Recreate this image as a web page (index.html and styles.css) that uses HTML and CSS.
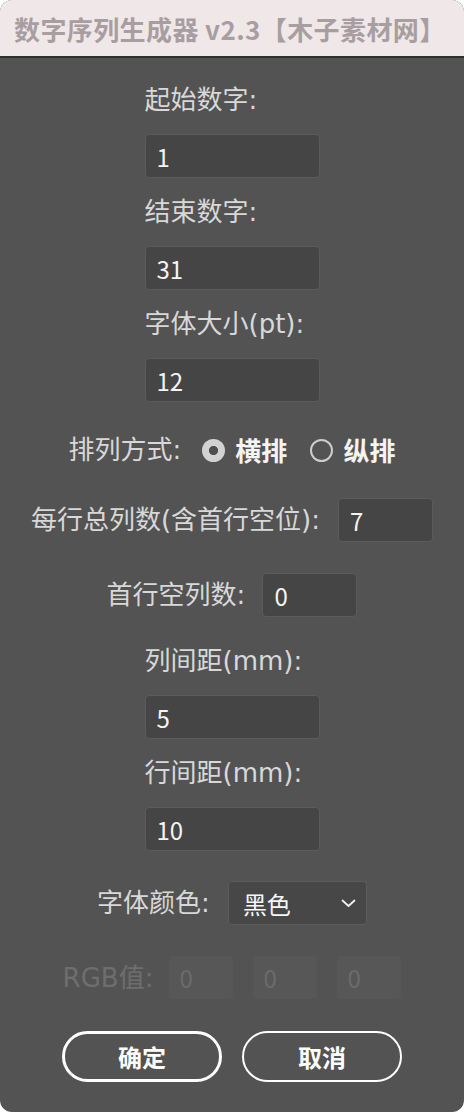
FILE: index.html
```html
<!DOCTYPE html>
<html lang="zh-CN">
<head>
<meta charset="utf-8">
<title>数字序列生成器</title>
<link rel="stylesheet" href="styles.css">
</head>
<body>
<div class="window">
  <header class="titlebar">数字序列生成器 v2.3【木子素材网】</header>
  <main class="form">
    <div class="stack">
      <label class="label">起始数字:</label>
      <input class="field" type="text" value="1">
    </div>
    <div class="stack gap-s">
      <label class="label">结束数字:</label>
      <input class="field" type="text" value="31">
    </div>
    <div class="stack gap-s">
      <label class="label">字体大小(pt):</label>
      <input class="field" type="text" value="12">
    </div>

    <div class="radio-row">
      <span class="label radio-label">排列方式:</span>
      <span class="option"><span class="radio checked"></span>横排</span>
      <span class="option"><span class="radio"></span>纵排</span>
    </div>

    <div class="row row-cols">
      <label class="label">每行总列数(含首行空位):</label>
      <input class="field short" type="text" value="7">
    </div>
    <div class="row row-empty">
      <label class="label">首行空列数:</label>
      <input class="field short" type="text" value="0">
    </div>

    <div class="stack gap-m">
      <label class="label">列间距(mm):</label>
      <input class="field" type="text" value="5">
    </div>
    <div class="stack gap-s">
      <label class="label">行间距(mm):</label>
      <input class="field" type="text" value="10">
    </div>

    <div class="row row-color">
      <span class="label">字体颜色:</span>
      <div class="select">
        <span>黑色</span>
        <svg class="chevron" width="15" height="9" viewBox="0 0 15 9"><path d="M1.5 1.5 L7.5 7 L13.5 1.5" fill="none" stroke="#f0f0f0" stroke-width="1.8" stroke-linecap="round" stroke-linejoin="round"/></svg>
      </div>
    </div>

    <div class="row rgb-row">
      <span class="label disabled">RGB值:</span>
      <input class="field rgb" type="text" value="0" disabled>
      <input class="field rgb" type="text" value="0" disabled>
      <input class="field rgb" type="text" value="0" disabled>
    </div>

    <div class="buttons">
      <button class="btn primary" type="button">确定</button>
      <button class="btn" type="button">取消</button>
    </div>
  </main>
</div>
</body>
</html>
```
FILE: styles.css
```css
* { box-sizing: border-box; }

html, body {
  margin: 0;
  padding: 0;
  background: #ffffff;
}

body {
  font-family: "Noto Sans CJK SC", "Noto Sans", sans-serif;
}

.window {
  width: 464px;
  height: 1112px;
  border-radius: 12px;
  overflow: hidden;
  background: #535353;
  display: flex;
  flex-direction: column;
}

.titlebar {
  flex: none;
  height: 58px;
  padding-left: 14px;
  display: flex;
  align-items: center;
  background: #f0e7e9;
  color: #a89ea2;
  font-size: 26px;
  font-weight: 700;
  letter-spacing: 0.4px;
  white-space: nowrap;
  border-bottom: 2px solid #2f2f2f;
}

.form {
  display: flex;
  flex-direction: column;
  align-items: center;
  padding-top: 27px;
}

.stack {
  width: 175px;
  display: flex;
  flex-direction: column;
  gap: 19px;
}

.gap-s { margin-top: 19px; }
.gap-m { margin-top: 29px; }

.label {
  font-family: "DejaVu Sans", "Noto Sans CJK SC", sans-serif;
  font-size: 26px;
  line-height: 30px;
  color: #d8d8d8;
  white-space: nowrap;
}

.field {
  width: 100%;
  height: 44px;
  padding: 0 0 0 11px;
  background: #454545;
  border: 1px solid #5b5b5b;
  border-radius: 4px;
  color: #f4f4f4;
  font-family: inherit;
  font-size: 24px;
  outline: none;
}

.field.short { width: 95px; }

.row {
  display: flex;
  align-items: center;
}

.radio-row {
  margin-top: 33px;
  display: flex;
  align-items: center;
  height: 30px;
}

.radio-label { margin-right: 21px; }

.option {
  display: flex;
  align-items: center;
  gap: 10px;
  font-size: 26px;
  line-height: 30px;
  font-weight: 700;
  color: #f4f4f4;
}

.option + .option { margin-left: 23px; }

.radio {
  width: 23px;
  height: 23px;
  border-radius: 50%;
  border: 2px solid #cdcdcd;
}

.radio.checked {
  border: none;
  background: radial-gradient(circle, #4e4e4e 0 4.2px, #d2d2d2 5px);
}

.row-cols { margin-top: 33px; gap: 18px; }
.row-empty { margin-top: 31px; gap: 17px; }
.row-color { margin-top: 30px; gap: 18px; }

.select {
  width: 139px;
  height: 44px;
  padding: 0 10px 0 14px;
  display: flex;
  align-items: center;
  justify-content: space-between;
  background: #474747;
  border: 1px solid #5c5c5c;
  border-radius: 4px;
  color: #f6f6f6;
  font-size: 24px;
}

.chevron { display: block; }

.rgb-row {
  margin-top: 31px;
  gap: 20px;
}

.label.disabled {
  color: #6e6e6e;
  margin-right: -4px;
}

.field.rgb {
  width: 64px;
  height: 43px;
  background: #575757;
  border: none;
  color: #6b6b6b;
  padding-left: 10px;
}

.buttons {
  margin-top: 32px;
  display: flex;
  gap: 20px;
}

.btn {
  width: 160px;
  height: 51px;
  border-radius: 26px;
  background: transparent;
  border: 2px solid #ffffff;
  color: #ffffff;
  font-family: inherit;
  font-size: 24px;
  font-weight: 700;
  cursor: pointer;
}

.btn.primary { border-width: 3px; }
```
